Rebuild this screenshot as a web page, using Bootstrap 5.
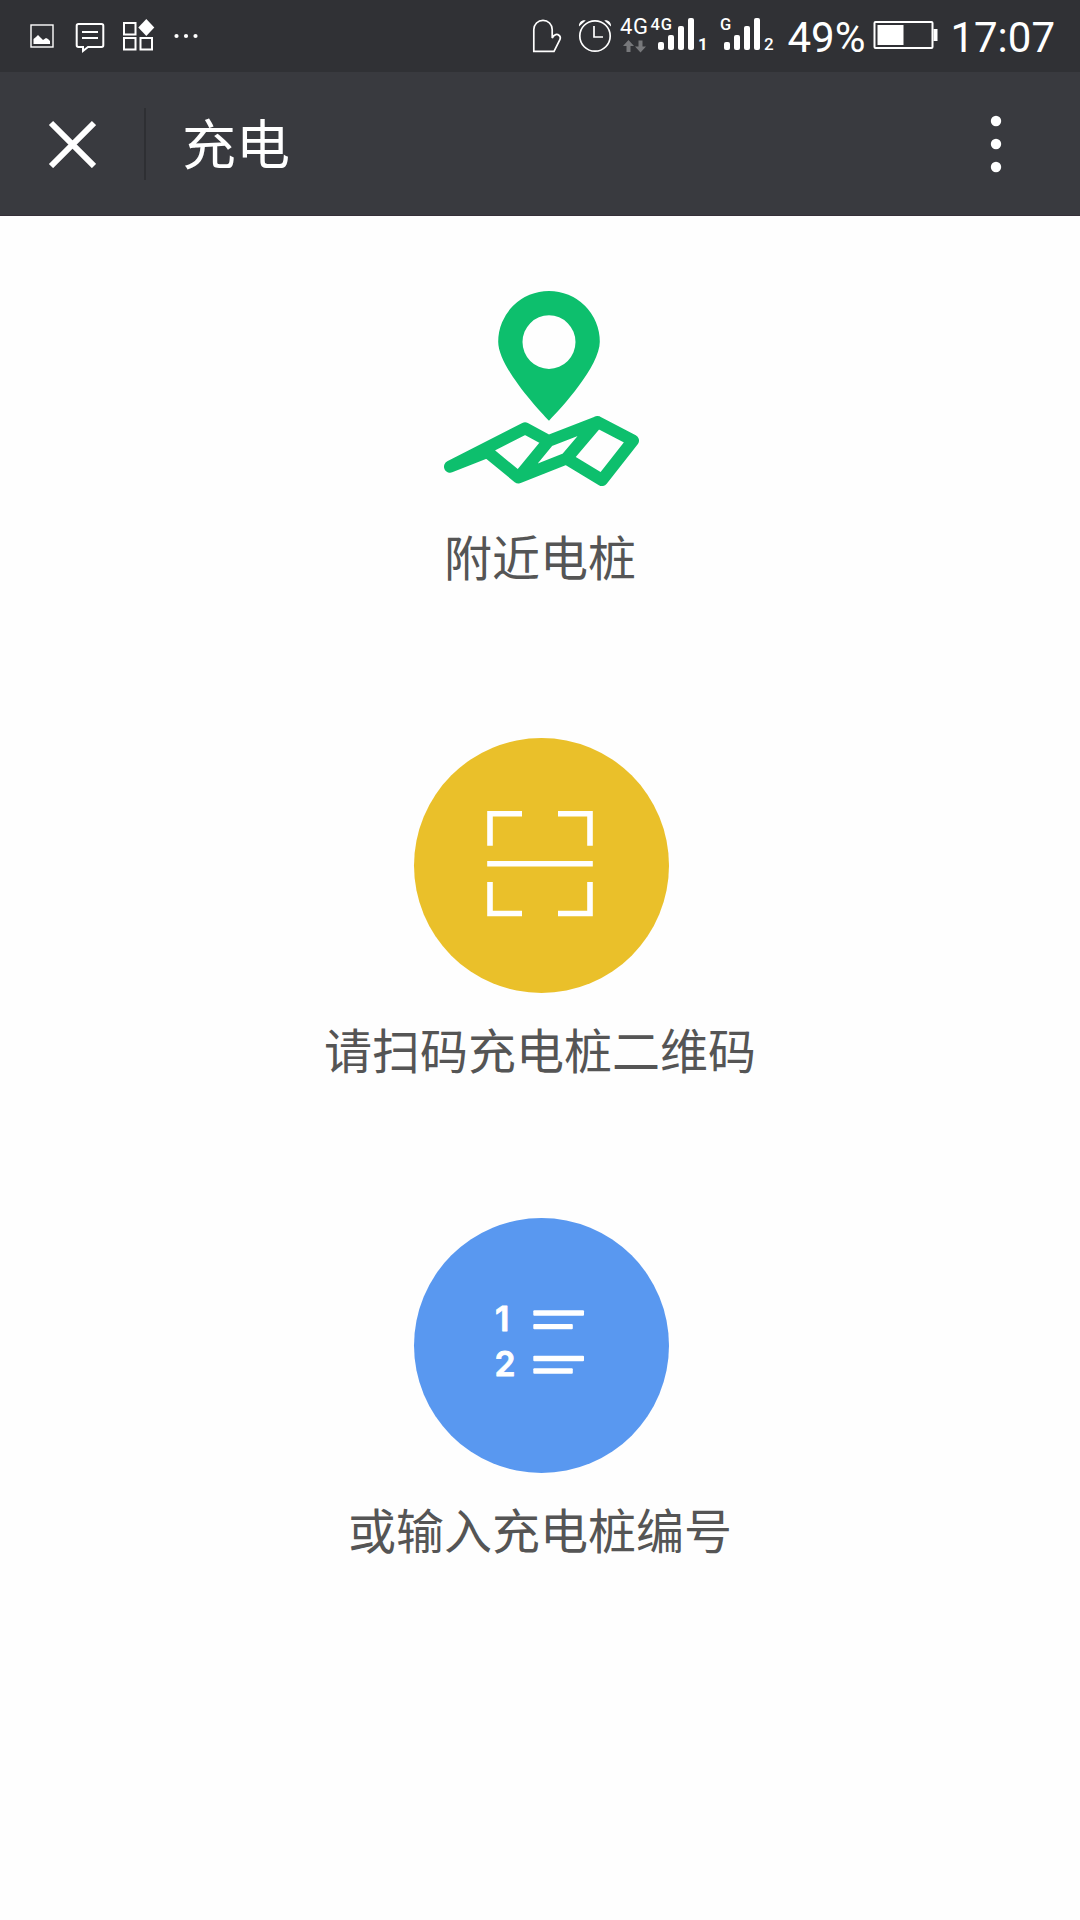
<!DOCTYPE html>
<html lang="zh-CN">
<head>
<meta charset="utf-8">
<meta name="viewport" content="width=device-width, initial-scale=1">
<title>充电</title>
<link href="https://cdn.jsdelivr.net/npm/bootstrap@5.3.0/dist/css/bootstrap.min.css" rel="stylesheet">
<style>
  body { font-family: Roboto, "Noto Sans CJK SC", sans-serif; min-height: 1920px; background: #fefefe; }
  svg { display: block; flex: none; }
  .status-strip { height: 72px; background: #303135; padding: 0 25px 0 24px; }
  .status-num { font: 400 42px/72px Roboto, sans-serif; padding-top: 4px; }
  .title-bar { height: 144px; background: #393a3f; box-shadow: inset 0 -1px #352f38; padding-left: 48px; padding-right: 78px; }
  .title-rule { width: 2px; height: 72px; background: #2e2f33; margin: 0 36px 0 48px; }
  .title-text { font: 400 54px/72px "Noto Sans CJK SC", sans-serif; padding-bottom: 4px; }
  .entry-list { padding-top: 74px; }
  .entry-label { font: 400 48px/72px "Noto Sans CJK SC", sans-serif; color: #555; }
  .entry-disc { width: 255px; height: 255px; margin-left: 3px; }
  .disc-scan { background: #eac02a; }
  .disc-code { background: #5998f0; }
  .entry-nearby { height: 448px; }
  .entry-nearby .entry-label { margin-top: 31px; }
  .entry-scan { height: 480px; }
  .disc-gap { margin-top: 19px; }
</style>
<script src="https://cdn.jsdelivr.net/npm/bootstrap@5.3.0/dist/js/bootstrap.bundle.min.js"></script>
</head>
<body>
<header class="text-white">
  <div class="status-strip d-flex align-items-center justify-content-between">
    <svg width="180" height="72" viewBox="24 0 180 72" fill="none" stroke="#fff">
      <rect x="31" y="25" width="22" height="22" stroke-width="1.4"/>
      <path d="M33.5 44v-5l2.500-2 2-2 3 3 2 2 3-2 2 1 2 2v3z" fill="#fff" stroke="none"/>
      <path d="M78.500 24h23a1.800 1.800 0 0 1 1.800 1.800v19.400a1.800 1.800 0 0 1-1.800 1.800H88l-5 4v-4h-4.500a1.800 1.800 0 0 1-1.800-1.800V25.800A1.800 1.800 0 0 1 78.500 24z" stroke-width="2"/>
      <path d="M82 32h16M82 38h16" stroke-width="2"/>
      <path d="M124 23h11.500v11.500H124zM124 38h11.500v11.500H124zM140.500 38H152v11.500h-11.500z" stroke-width="2"/>
      <path d="M146.300 19l8 8.500-8 8.500-8-8.500z" fill="#fff" stroke="none"/>
      <g fill="#fff" stroke="none"><circle cx="176.500" cy="36" r="2.100"/><circle cx="186" cy="36" r="2.100"/><circle cx="195.500" cy="36" r="2.100"/></g>
    </svg>
    <div class="d-flex align-items-center">
      <svg width="257" height="72" viewBox="530 0 257 72" fill="none" stroke="#fff">
        <path d="M533.800 51.300V29.500a9.200 9.200 0 0 1 18.400 0V38c2-4 5-4.200 7-2.500 1.200 1 1.400 2.400.8 4l-6 11.800z" stroke-width="1.700"/>
        <circle cx="595" cy="36" r="15.200" stroke-width="1.700"/>
        <path d="M594 26v11h9" stroke-width="1.700"/>
        <path d="M579 26.500c-.5-4 3-6.800 6.700-6zM611 26.500c.5-4-3-6.800-6.700-6z" fill="#fff" stroke="none"/>
        <g fill="#77787b" stroke="none">
          <path d="M628.500 40l5.500 6h-3.500v6h-4v-6H623zM640.500 52.500l-5.500-6h3.500v-6h4v6h3.500z"/>
        </g>
        <g fill="#fff" stroke="none" font-family="Roboto, sans-serif">
          <text x="620" y="34" font-size="22" textLength="28">4G</text>
          <text x="650.500" y="30" font-size="16.500" font-weight="500" textLength="21.500">4G</text>
          <text x="720" y="30" font-size="16.500" font-weight="500">G</text>
          <text x="698" y="50" font-size="17" font-weight="700">1</text>
          <text x="764" y="50" font-size="17" font-weight="500">2</text>
          <rect x="658" y="42" width="6" height="8" rx="2"/><rect x="668" y="35" width="6" height="15" rx="2"/><rect x="678" y="26" width="6" height="24" rx="2"/><rect x="688" y="18" width="6" height="32" rx="2"/>
          <rect x="724" y="42" width="6" height="8" rx="2"/><rect x="734" y="35" width="6" height="15" rx="2"/><rect x="744" y="26" width="6" height="24" rx="2"/><rect x="754" y="18" width="6" height="32" rx="2"/>
        </g>
      </svg>
      <span class="status-num">49%</span>
      <svg width="85" height="72" viewBox="864.500 0 85 72">
        <rect x="874" y="22" width="58" height="26" rx="1" fill="none" stroke="#fff" stroke-width="2"/>
        <path d="M877 25h26v20h-26zM933 29h4v12h-4z" fill="#fff"/>
      </svg>
      <span class="status-num">17:07</span>
    </div>
  </div>
  <nav class="title-bar d-flex align-items-center">
    <svg width="48" height="48" viewBox="0 0 48 48"><path d="M3 3l43 43M46 3l-43 43" stroke="#fff" stroke-width="6"/></svg>
    <div class="title-rule"></div>
    <div class="title-text flex-grow-1">充电</div>
    <svg width="12" height="60" viewBox="0 0 12 60" fill="#fff"><circle cx="6" cy="7" r="5.200"/><circle cx="6" cy="30" r="5.200"/><circle cx="6" cy="53" r="5.200"/></svg>
  </nav>
</header>
<main class="entry-list d-flex flex-column align-items-center">
  <section class="entry-nearby d-flex flex-column align-items-center">
    <svg width="198" height="198" viewBox="441 290 198 198">
      <path fill="#0dbf6d" fill-rule="evenodd" d="M549 420.700C537 408.500 498.200 366 498.200 341.700a50.800 50.800 0 0 1 101.600 0C599.800 366 561 408.500 549 420.700zM549 315.300a26.500 26.800 0 1 0 0 53.600a26.500 26.800 0 1 0 0-53.600z"/>
      <path fill="none" stroke="#0dbf6d" stroke-width="12" stroke-linejoin="round" stroke-linecap="round" d="M450 466.700L525 428.300L548.500 441L597.500 422L633 440.500L602 480L566.500 458.500L518.500 477.500L487.500 452L450 466.700M518.500 477.500L548.500 441M566.500 458.500L597.500 422"/>
    </svg>
    <div class="entry-label">附近电桩</div>
  </section>
  <section class="entry-scan d-flex flex-column align-items-center">
    <div class="entry-disc disc-scan rounded-circle">
      <svg width="255" height="255" viewBox="414 738 255 255">
        <path fill="none" stroke="#fff" stroke-width="5.600" d="M522 813.800h-32v32M558 813.800h32v32M487.200 863.800h105.600M490 882v31.500h32M590 882v31.500h-32"/>
      </svg>
    </div>
    <div class="entry-label disc-gap">请扫码充电桩二维码</div>
  </section>
  <section class="d-flex flex-column align-items-center">
    <div class="entry-disc disc-code rounded-circle">
      <svg width="255" height="255" viewBox="414 1218 255 255" fill="#fff">
        <g font-family="Inter, sans-serif" font-weight="600" font-size="34" stroke="#fff" stroke-width=".8" stroke-linejoin="round">
          <text x="495" y="1330.500">1</text><text x="494.500" y="1375.500" textLength="21" lengthAdjust="spacingAndGlyphs">2</text>
        </g>
        <rect x="533.300" y="1310.300" width="50.700" height="5.500" rx="1"/><rect x="533.300" y="1324" width="39.500" height="5.200" rx="1"/>
        <rect x="533.300" y="1355.700" width="50.700" height="5.500" rx="1"/><rect x="533.300" y="1368.300" width="39.500" height="5.500" rx="1"/>
      </svg>
    </div>
    <div class="entry-label disc-gap">或输入充电桩编号</div>
  </section>
</main>
</body>
</html>
